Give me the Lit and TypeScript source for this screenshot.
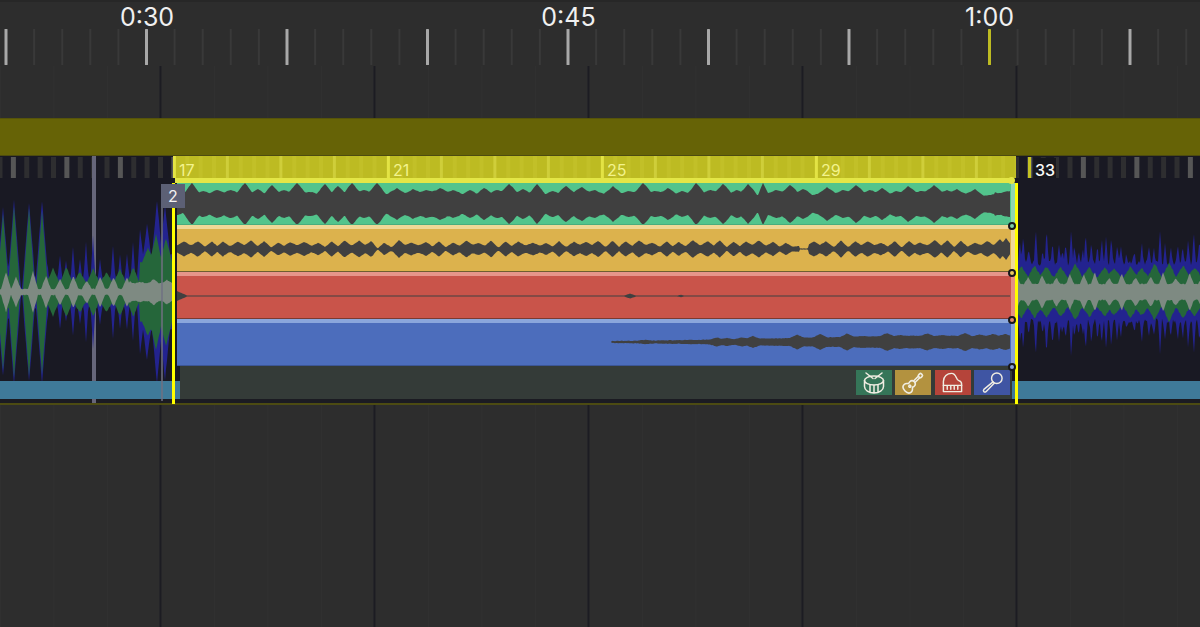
import { LitElement, html, svg, css } from "lit";
import { customElement } from "lit/decorators.js";

const rng = (seed: number) => () => {
  seed |= 0; seed = (seed + 0x6d2b79f5) | 0;
  let t = Math.imul(seed ^ (seed >>> 15), 1 | seed);
  t = (t + Math.imul(t ^ (t >>> 7), 61 | t)) ^ t;
  return ((t ^ (t >>> 14)) >>> 0) / 4294967296;
};

type Peak = [number, number, number?];
const STEP = 13.375;

function amp(x: number, peaks: Peak[], w: number, base: (x: number) => number) {
  let a = base(x);
  for (const [px, pa, pw] of peaks) {
    const d = Math.abs(x - px) / (pw ?? w);
    if (d < 1) a = Math.max(a, pa * (1 - d) + base(x) * d);
  }
  return a;
}

function wave(x0: number, x1: number, cy: number, peaks: Peak[], w: number, base: (x: number) => number, jitter: number, seed: number, off = 0) {
  const r = rng(seed);
  const top: string[] = [];
  const bot: string[] = [];
  for (let x = x0; x <= x1; x += 1) {
    const a = amp(x, peaks, w, base);
    if (a <= 0.02) { top.push(`${x - off},${cy}`); bot.unshift(`${x - off},${cy}`); continue; }
    top.push(`${x - off},${(cy - a - (r() - 0.5) * jitter).toFixed(1)}`);
    bot.unshift(`${x - off},${(cy + a + (r() - 0.5) * jitter).toFixed(1)}`);
  }
  return `M${top.join("L")}L${bot.join("L")}Z`;
}

const greenPeaks: Peak[] = [[192, 21], [203, 13], [217, 14], [231, 14], [245, 21], [258, 15], [272, 19], [284, 14], [297, 21], [310, 12], [325, 20], [338, 18], [352, 21], [364, 14], [377, 21], [397, 16], [413, 15], [426, 14], [440, 16], [453, 14], [470, 14], [484, 16], [497, 14], [509, 20], [523, 15], [537, 20], [553, 13], [566, 18], [582, 17], [595, 14], [613, 18], [628, 13], [643, 21], [655, 13], [668, 16], [682, 13], [696, 21], [710, 14], [723, 20], [737, 14], [748, 20], [763, 21, 5], [776, 14], [790, 19], [803, 15], [827, 17], [843, 14], [856, 19], [870, 14], [882, 16], [896, 13], [908, 18], [921, 13], [934, 19], [947, 14], [957, 15], [975, 15], [1000, 11], [1010, 13]];
const greenBase = (x: number) => (x > 975 && x < 995 ? 7.5 + (x - 978) * 0.12 : 10.5 + 0.8 * Math.sin(x * 0.47) + Math.sin(x * 0.09));

const yellowPeaks: Peak[] = [];
{
  const r = rng(11);
  for (let k = 0; k < 63; k++) {
    const x = 184 + k * 13.4 + (r() - 0.5) * 3;
    if (Math.abs(x - 378) < 6 || Math.abs(x - 804) < 6) continue;
    yellowPeaks.push([x, 6 + r() * 3]);
  }
  yellowPeaks.push([1000, 10], [1006, 11]);
}
const yellowBase = (x: number) => (Math.abs(x - 378) < 5 || Math.abs(x - 804) < 5 ? 0.6 : 3 + 1 * Math.sin(x * 0.11));

const redPeaks: Peak[] = [[177, 5, 10], [630, 2.5, 6], [681, 1.2, 4]];
const redBase = () => 0.5;

const bluePeaks: Peak[] = [[645, 2.2], [673, 1.8], [690, 2.2], [717, 4.5], [727, 4], [742, 4.5], [753, 6], [797, 7.5], [820, 8], [847, 8.5], [861, 6], [874, 5.5], [887, 9], [900, 7], [913, 6.5], [927, 8.5], [942, 7], [953, 6.5], [965, 9], [980, 7.5], [993, 8], [1005, 8]];
const blueBase = (x: number) => (x < 612 ? 0 : x < 700 ? 1 + (x - 612) * 0.012 : Math.min(6, 2.2 + (x - 700) * 0.02));

function leftLayers() {
  const r = rng(5);
  const blue: Peak[] = [[3, 84, 7], [14, 92, 7], [29, 90, 7], [42, 92, 7],
    [60, 36, 2.5], [66, 30, 2.5], [73, 44, 2.5], [80, 32, 2.5], [86, 50, 2.5], [93, 56, 2.5], [100, 32, 2.5], [113, 46, 2.5], [120, 38, 2.5], [127, 38, 2.5], [133, 50, 2.5], [140, 62, 3], [147, 68, 4], [157, 92, 5], [165, 88, 5]];
  const green: Peak[] = [[3, 78], [14, 86], [29, 84], [42, 82]];
  for (let k = 0; k < 7; k++) green.push([53 + k * STEP, 19 + r() * 8]);
  green.push([148, 44], [156, 58], [166, 54]);
  const gray: Peak[] = [[6, 20], [16, 15], [33, 21], [46, 16]];
  for (let k = 0; k < 9; k++) gray.push([60 + k * STEP, 10 + r() * 7]);
  return {
    b: wave(0, 172, 114, blue, 5.5, (x) => (x < 48 ? 3 : x < 140 ? 13 : 38), 3, 21),
    g: wave(0, 172, 114, green, 6, (x) => (x < 48 ? 3 : x < 140 ? 10 : 30), 1.5, 22),
    w: wave(0, 172, 114, gray, 5, (x) => (x < 130 ? 3 : 9), 1, 23),
  };
}

function rightLayers() {
  const r = rng(77);
  const blue: Peak[] = [];
  for (let x = 1020; x < 1200; x += 3 + r() * 5) blue.push([x, 38 + r() * 28]);
  const green: Peak[] = [];
  const gray: Peak[] = [];
  for (let k = 0; k < 15; k++) {
    green.push([1022 + k * STEP + (r() - 0.5) * 5, 23 + r() * 7]);
    gray.push([1016 + k * STEP + (r() - 0.5) * 3, 14 + r() * 7]);
  }
  return {
    b: wave(1018, 1200, 114, blue, 2, () => 29, 5, 31),
    g: wave(1018, 1200, 114, green, 7, () => 15, 2, 32),
    w: wave(1018, 1200, 114, gray, 4, () => 8, 1.2, 33),
  };
}

const left = leftLayers();
const right = rightLayers();
const ticks = Array.from({ length: 90 }, (_, k) => k);

@customElement("app-root")
export class AppRoot extends LitElement {
  static styles = css`
    :host { display: block; width: 1200px; height: 627px; overflow: hidden; font-family: Inter, "Liberation Sans", sans-serif; }
    .page { position: relative; display: flex; flex-direction: column; width: 1200px; height: 627px; background: #2d2d2d; }
    svg { display: block; }
    .ruler { position: relative; height: 66px; flex: none; border-top: 2px solid #272727; box-sizing: border-box; }
    .time { position: absolute; top: 0; transform: translateX(-50%); font-size: 25px; line-height: 30px; color: #f0f0f0; }
    .grid {
      background-image:
        linear-gradient(90deg, #1c1c22 0 1.5px, transparent 1.5px),
        linear-gradient(90deg, #303030 0 1px, transparent 1px);
      background-size: 214px 100%, 53.5px 100%;
      background-position: 159.5px 0, 0 0;
    }
    .upper { height: 52px; flex: none; }
    .olive { height: 38px; flex: none; background: #666306; border-top: 1px solid #56540a; border-bottom: 1px solid #4d4b10; box-sizing: border-box; }
    .beats { height: 22px; flex: none; background: #191923; position: relative; }
    .audio { height: 203px; flex: none; background: #191923; position: relative; }
    .wave { position: relative; z-index: 1; }
    .clipbar { height: 18px; flex: none; background: #3f7a99; position: relative; z-index: 2; }
    .under { height: 4px; flex: none; background: #1b1b22; }
    .rule { height: 2px; flex: none; background: #4c4b12; position: relative; z-index: 2; }
    .lower { flex: 1; }
    .playhead { position: absolute; left: 91.5px; top: 156px; width: 4.5px; height: 248px; background: #66667a; }
    .bar33 { position: absolute; left: 1028px; top: 1px; width: 3px; height: 21px; background: #c4c222; }
    .num33 { position: absolute; left: 1034px; top: 2px; padding: 0 1px; height: 20px; line-height: 25px; font-size: 16px; font-weight: 500; color: #f8f8f8; background: #17171c; }
    .marker { position: absolute; left: 161px; top: 184px; width: 24px; z-index: 5; display: flex; flex-direction: column; }
    .badge { height: 24px; background: #5c6075; color: #f2f2f2; font-size: 16px; line-height: 25px; text-align: center; }
    .stem { width: 1.5px; height: 193px; background: rgba(112, 112, 130, 0.75); }
    .sel { position: absolute; left: 172px; top: 156px; width: 846px; height: 248px; z-index: 3; display: flex; flex-direction: column; }
    .sel-ruler { position: relative; height: 22px; margin-left: 1px; margin-right: 2px; flex: none; background: #bdbb22; }
    .bar-num { position: absolute; top: 2px; line-height: 25px; font-size: 16px; color: #f3f38c; }
    .sel-line { height: 5px; flex: none; margin-left: 3px; margin-right: 6px; background: #e3e646; position: relative; z-index: 2; }
    .knob { position: absolute; right: -3px; top: -1px; width: 7px; height: 7px; border-radius: 50%; background: #e3e646; }
    .sel-body { flex: 1; display: flex; min-height: 0; }
    .edge { width: 3px; flex: none; background: #ffff00; }
    .gap { width: 2px; flex: none; }
    .content { flex: 1; min-width: 0; display: flex; flex-direction: column; }
    .track { display: flex; flex: none; position: relative; }
    .lane { flex: 1; min-width: 0; display: flex; flex-direction: column; }
    .tab { height: 4px; flex: none; }
    .body { flex: 1; min-height: 0; border-bottom: 1px solid; box-sizing: border-box; overflow: hidden; }
    .side { width: 4.5px; flex: none; position: relative; }
    .handle { position: absolute; left: -2.5px; bottom: -5px; width: 8px; height: 8px; border: 2px solid #17171a; border-radius: 50%; box-sizing: border-box; z-index: 2; }
    .t-green { height: 42px; } .t-tall { height: 47px; }
    .panel { height: 33px; flex: none; margin-left: 3px; margin-right: 3px; background: #343b38; display: flex; justify-content: flex-end; align-items: center; padding-right: 2px; box-sizing: border-box; }
    .stems { display: flex; gap: 3.3px; }
    .ib { width: 36px; height: 25px; display: flex; align-items: center; justify-content: center; }
    .ib svg { fill: none; stroke: #f0ede2; stroke-width: 1.5; stroke-linecap: round; stroke-linejoin: round; }
    .base { height: 4px; flex: none; margin-left: 3px; background: #1b1b22; }
  `;

  private ticksRuler() {
    const items = [];
    for (let k = 0; k < 43; k++) {
      const x = 6 + k * 28.1;
      const major = k % 5 === 0;
      const y = k === 35;
      if (major) items.push(svg`<rect x=${x - 1.5} y="27" width="3" height="36" rx="0.6" fill=${y ? "#bdbb22" : "#a8a8a8"}></rect>`);
      else items.push(svg`<rect x=${x - 1} y="27" width="2" height="36" fill="#393939"></rect>`);
    }
    return items;
  }

  private track(color: string, tab: string, line: string, sideCol: string, d: string, cls: string, showTab: boolean, knob: string, fill = "#404040") {
    return html`<div class="track ${cls}">
      <div class="lane">
        ${showTab ? html`<div class="tab" style="background:${tab}"></div>` : ""}
        <div class="body" style="background:${color};border-color:${line}">
          <svg width="834" height="48"><path d=${d} fill=${fill}></path></svg>
        </div>
      </div>
      <div class="side" style="background:${sideCol}"><div class="handle" style="background:${knob}"></div></div>
    </div>`;
  }

  render() {
    const O = 177;
    const gw = wave(177, 1010, 21, greenPeaks, 9, greenBase, 0.3, 1, O);
    const yw = wave(177, 1010, 20, yellowPeaks, 6.5, yellowBase, 0.4, 2, O);
    const rw = wave(177, 1010, 20, redPeaks, 7, redBase, 0.1, 3, O);
    const bw = wave(600, 1010, 19, bluePeaks, 7, blueBase, 0.5, 4, O);
    return html`<div class="page">
      <div class="ruler">
        <svg width="1200" height="64">${this.ticksRuler()}</svg>
        <div class="time" style="left:147px">0:30</div>
        <div class="time" style="left:568.5px">0:45</div>
        <div class="time" style="left:989.5px">1:00</div>
      </div>
      <div class="upper grid"></div>
      <div class="olive"></div>
      <div class="beats">
        <svg width="1200" height="22">
          ${ticks.map((k) => svg`<rect x=${k * STEP - 2.5} y="1" width="5" height="21" fill=${k % 4 === 1 ? "#565656" : "#2e2e30"}></rect>`)}
        </svg>
        <div class="bar33"></div>
        <div class="num33">33</div>
      </div>
      <div class="audio">
        <svg class="wave" width="1200" height="203">
          <path d=${left.b} fill="#23238f"></path><path d=${left.g} fill="#25663a"></path><path d=${left.w} fill="#7e8a82"></path>
          <path d=${right.b} fill="#23238f"></path><path d=${right.g} fill="#25663a"></path><path d=${right.w} fill="#7e8a82"></path>
        </svg>
      </div>
      <div class="clipbar"></div>
      <div class="under"></div>
      <div class="rule"></div>
      <div class="lower grid"></div>

      <div class="playhead"></div>
      <div class="marker"><div class="badge">2</div><div class="stem"></div></div>

      <div class="sel">
        <div class="sel-ruler">
          <svg width="843" height="22">
            ${ticks.filter((k) => k >= 13 && k < 77).map((k) => {
              const x = k * STEP - 173;
              if ((k - 13) % 16 === 0) return svg`<rect x=${x - 1} y="0" width="3" height="22" fill="#e3e344"></rect>`;
              if (k % 4 === 1) return svg`<rect x=${x - 1.5} y="0" width="3" height="22" fill="#cfce3a"></rect>`;
              return svg`<rect x=${x - 2} y="0" width="4" height="22" fill="#c2c028"></rect>`;
            })}
          </svg>
          ${[["17", 6], ["21", 220], ["25", 434], ["29", 648]].map(([t, x]) => html`<div class="bar-num" style="left:${x}px">${t}</div>`)}
        </div>
        <div class="sel-line"><div class="knob"></div></div>
        <div class="sel-body">
          <div class="edge"></div>
          <div class="gap"></div>
          <div class="content">
            ${this.track("#52c48c", "", "#49ad7d", "#8fd6b2", gw, "t-green", false, "#7fd0a8")}
            ${this.track("#dcb24d", "#efd896", "#6e5e30", "#f1d999", yw, "t-tall", true, "#e8c860")}
            ${this.track("#c9544a", "#e6958a", "#7a3a33", "#e48f84", rw, "t-tall", true, "#e08a70")}
            ${this.track("#4c6dbc", "#8aa6dc", "#3c5696", "#8aa5d9", bw, "t-tall", true, "#8aa5d9")}
            <div class="panel">
              <div class="stems">
                <div class="ib" style="background:#357558">
                  <svg width="24" height="24" viewBox="0 0 24 24">
                    <path d="M4 2l7 5.5M20 2l-7 5.5"></path>
                    <ellipse cx="12" cy="9.5" rx="9.5" ry="4.5"></ellipse>
                    <path d="M2.5 9.5v6c0 3.6 4.3 6.5 9.500 6.500s9.500-2.900 9.500-6.500v-6M8 14v7.500M12 14.500v7.500M16 14v7.500"></path>
                  </svg>
                </div>
                <div class="ib" style="background:#b3923f">
                  <svg width="25" height="25" viewBox="0 0 24 24">
                    <g transform="rotate(45 12 12)">
                      <path d="M12 11c-2 0-3 1-3 3 0 1 .6 1.500.2 2.300C8.200 17.200 7 17.800 7 19.700c0 2.500 2.200 3.800 5 3.800s5-1.300 5-3.800c0-1.900-1.200-2.500-2.200-3.400-.4-.8.200-1.300.2-2.300 0-2-1-3-3-3z"></path>
                      <circle cx="12" cy="17" r="1"></circle>
                      <path d="M11 11V4.500M13 11V4.500"></path>
                      <rect x="10.300" y="0.800" width="3.400" height="3.700" rx="1.200"></rect>
                    </g>
                  </svg>
                </div>
                <div class="ib" style="background:#b5443a">
                  <svg width="23" height="23" viewBox="0 0 24 24">
                    <path d="M2.500 21.500V11C2.500 5.500 6.500 2.500 11 2.500c5.500 0 4 6.500 7.500 7.500 2.200.6 3 1.500 3 3.500v8z"></path>
                    <path d="M2.500 15h19M6.500 15v4M10.200 15v4M13.800 15v4M17.500 15v4"></path>
                  </svg>
                </div>
                <div class="ib" style="background:#3f55a3">
                  <svg width="23" height="23" viewBox="0 0 24 24">
                    <circle cx="16.500" cy="7.500" r="5.500"></circle>
                    <path d="M12.500 11.300 3 19.200a1.700 1.700 0 0 0-.1 2.200 1.700 1.700 0 0 0 2.300.200l8.600-8.900"></path>
                  </svg>
                </div>
              </div>
            </div>
            <div class="base"></div>
          </div>
          <div class="edge"></div>
        </div>
      </div>
    </div>`;
  }
}
